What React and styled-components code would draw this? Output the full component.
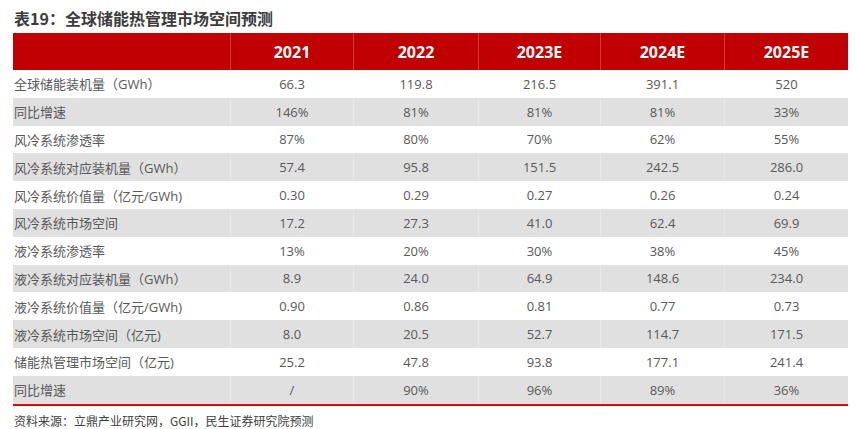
import React from "react";
import styled, { createGlobalStyle } from "styled-components";

const GlobalStyle = createGlobalStyle`
  html, body {
    margin: 0;
    padding: 0;
    background: #ffffff;
  }
  body {
    font-family: "Open Sans", "Noto Sans CJK SC", sans-serif;
  }
`;

const years = ["2021", "2022", "2023E", "2024E", "2025E"];

const rows = [
  ["全球储能装机量（GWh）", "66.3", "119.8", "216.5", "391.1", "520"],
  ["同比增速", "146%", "81%", "81%", "81%", "33%"],
  ["风冷系统渗透率", "87%", "80%", "70%", "62%", "55%"],
  ["风冷系统对应装机量（GWh）", "57.4", "95.8", "151.5", "242.5", "286.0"],
  ["风冷系统价值量（亿元/GWh)", "0.30", "0.29", "0.27", "0.26", "0.24"],
  ["风冷系统市场空间", "17.2", "27.3", "41.0", "62.4", "69.9"],
  ["液冷系统渗透率", "13%", "20%", "30%", "38%", "45%"],
  ["液冷系统对应装机量（GWh）", "8.9", "24.0", "64.9", "148.6", "234.0"],
  ["液冷系统价值量（亿元/GWh)", "0.90", "0.86", "0.81", "0.77", "0.73"],
  ["液冷系统市场空间（亿元)", "8.0", "20.5", "52.7", "114.7", "171.5"],
  ["储能热管理市场空间（亿元)", "25.2", "47.8", "93.8", "177.1", "241.4"],
  ["同比增速", "/", "90%", "96%", "89%", "36%"],
];

const Page = styled.div`
  padding: 7px 9px 0 13px;
  width: 835px;
`;

const Title = styled.h1`
  margin: 0 0 4px 1px;
  font-family: "Noto Sans CJK SC", sans-serif;
  font-size: 16px;
  font-weight: 700;
  line-height: 22px;
  color: #3c3c3c;
`;

const Table = styled.div`
  display: grid;
  grid-template-columns: 217px 123px 125px 122px 124px 124px;
  border-bottom: 2px solid #d10d0d;
`;

const HeadCell = styled.div`
  height: 37px;
  display: flex;
  align-items: center;
  justify-content: center;
  background: #c00000;
  color: #ffffff;
  font-family: "Open Sans", "Noto Sans CJK SC", sans-serif;
  font-size: 16px;
  font-weight: 700;
  border-left: ${(p) => (p.$first ? "none" : "1px solid #d4393a")};
`;

const Cell = styled.div`
  height: 27.8px;
  display: flex;
  align-items: center;
  justify-content: ${(p) => (p.$label ? "flex-start" : "center")};
  padding-left: ${(p) => (p.$label ? "1px" : "0")};
  background: ${(p) => (p.$striped ? "#e0e0e0" : "#ffffff")};
  color: #595959;
  font-size: 13px;
  white-space: nowrap;
  border-left: ${(p) =>
    p.$label ? "none" : p.$striped ? "1px solid #e8e8e8" : "1px solid #ffffff"};
`;

const Source = styled.p`
  margin: 6px 0 0 1px;
  font-family: "Noto Sans CJK SC", sans-serif;
  font-size: 12px;
  color: #404040;
`;

export default function App() {
  return (
    <>
      <GlobalStyle />
      <Page>
        <Title>表19：全球储能热管理市场空间预测</Title>
        <Table>
          <HeadCell $first />
          {years.map((y) => (
            <HeadCell key={y}>{y}</HeadCell>
          ))}
          {rows.map((row, i) =>
            row.map((v, j) => (
              <Cell key={`${i}-${j}`} $label={j === 0} $striped={i % 2 === 1}>
                {v}
              </Cell>
            ))
          )}
        </Table>
        <Source>资料来源：立鼎产业研究网，GGII，民生证券研究院预测</Source>
      </Page>
    </>
  );
}
